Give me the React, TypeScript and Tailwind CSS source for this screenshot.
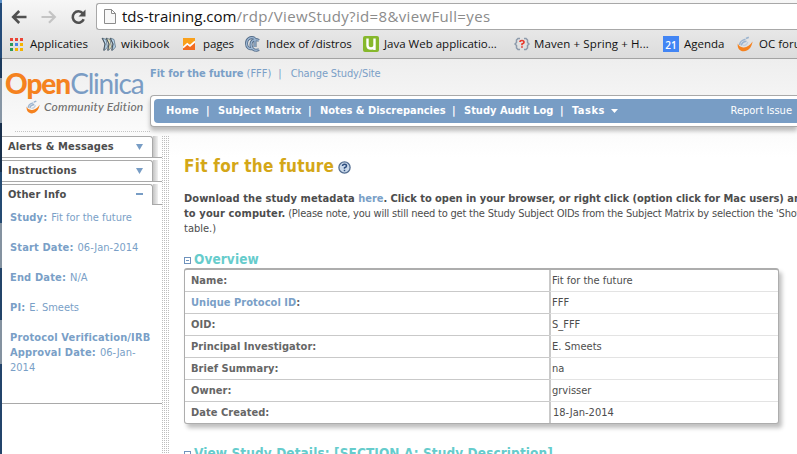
import React from "react";

const tahoma =
  "font-['DejaVu_Sans_Condensed','DejaVu_Sans',sans-serif] [font-stretch:75%]";
const segoe = "font-['Open_Sans',sans-serif]";

function Swoosh({ className }: { className: string }) {
  return (
    <svg className={className} viewBox="0 0 16 16" fill="none">
      <path d="M0.800 7.500C0 12.500 3 15.500 7 15.300C11 15 14.500 12 15.600 5.500C13 9.500 9.500 11.800 6.200 11.400C3.500 11 1.500 10 0.800 7.500Z" fill="#f5821f" />
      <path d="M2.600 9C2.500 6.500 5 4 8.500 3.300M4.500 9.500C4.500 7.500 6.500 5.600 9.500 5.200M9 2.500L11.800 1.200" stroke="#9cb4cf" strokeWidth="1.600" />
      <path d="M6 9.400C8 9.600 10 8.500 10.800 6" stroke="#c3cfdc" strokeWidth="1.300" />
    </svg>
  );
}

function AppsIcon() {
  const colors = ["#ea4335", "#ea4335", "#ea4335", "#2b9a5b", "#4a86e8", "#f4b400", "#2b9a5b", "#f4b400", "#f4b400"];
  return (
    <svg className="h-[13px] w-[13px]" viewBox="0 0 13 13" shapeRendering="crispEdges">
      {colors.map((c, i) => (
        <rect key={i} x={(i % 3) * 5} y={Math.floor(i / 3) * 5} width="3" height="3" fill={c} />
      ))}
    </svg>
  );
}

function BooksIcon() {
  return (
    <svg className="h-4 w-4" viewBox="0 0 16 16">
      {[0, 4, 8].map((x) => (
        <g key={x}>
          <path d={`M${x + 1.5} 2L${x + 5} 3.500L${x + 6.5} 11L${x + 3.5} 14.500L${x + 4} 8Z`} fill={x === 4 ? "#eee5b8" : "#bcd8ed"} stroke="#4c6477" strokeWidth="0.700" />
          <path d={`M${x + 1} 2L${x + 4} 8L${x + 2.5} 14.500`} fill="none" stroke="#343d46" strokeWidth="0.800" />
        </g>
      ))}
    </svg>
  );
}

function Toolbar() {
  return (
    <div className="flex h-[30px] items-center bg-gradient-to-b from-[#f7f7f7] to-[#e9e9e9] pl-[9px]">
      <svg className="mt-[3px] h-[16px] w-[16px] shrink-0" viewBox="0 0 16 16" fill="none" stroke="#505050" strokeWidth="2.600">
        <path d="M15.500 8H3M8.200 2L2.200 8L8.200 14" />
      </svg>
      <svg className="mt-[3px] ml-[14px] h-[16px] w-[16px] shrink-0" viewBox="0 0 16 16" fill="none" stroke="#c4c4c4" strokeWidth="2.200">
        <path d="M0.500 8H13.500M8 2.200L13.800 8L8 13.800" />
      </svg>
      <svg className="mt-[3px] ml-[13px] h-[16px] w-[17px] shrink-0" viewBox="0 0 17 16" fill="none">
        <path d="M12.800 4.300A5.700 5.700 0 1 0 13.700 10.200" stroke="#505050" strokeWidth="2.600" />
        <path d="M15.500 0.500V7.500H8.500Z" fill="#505050" />
      </svg>
      <div className="mt-[3px] ml-[9px] flex h-[27px] grow items-center rounded-l-[3px] border border-r-0 border-[#a8a8a8] bg-white pb-[1px] pl-[7px]">
        <svg className="h-[16px] w-[12px] shrink-0" viewBox="0 0 12 16" fill="#f8f8f8" stroke="#8c8c8c">
          <path d="M0.500 1.500H7.500L11.500 5.500V15.500H0.500ZM7.500 1.500V5.500H11.500" />
        </svg>
        <span className={`${segoe} mb-[1px] ml-[6px] text-[15px] leading-[24px] tracking-[0.350px] whitespace-nowrap text-[#8b8b8b]`}>
          <span className="tracking-normal text-[#111]">tds-training.com</span>/rdp/ViewStudy?id=8&amp;viewFull=yes
        </span>
      </div>
    </div>
  );
}

function Bookmarks() {
  const label = "whitespace-nowrap";
  return (
    <div className={`${segoe} flex h-[29px] items-center border-b border-[#a3a3a3] bg-gradient-to-b from-[#e7e7e7] to-[#dcdcdc] pl-[8px] text-[11.500px] text-[#111]`}>
      <div className="flex w-[91px] shrink-0 items-center gap-[7px]"><AppsIcon /><span className={label}>Applicaties</span></div>
      <div className="flex w-[82px] shrink-0 items-center gap-[4px]"><BooksIcon /><span className={`${label} tracking-[0.100px]`}>wikibook</span></div>
      <div className="flex w-[62px] shrink-0 items-center gap-[8px]">
        <svg className="h-3 w-3 shrink-0" viewBox="0 0 12 12"><rect width="12" height="12" fill="#f26b21" /><path d="M0 0H12V3L7.500 7L5 5L0 9Z" fill="#f9a01b" /><path d="M0 9.500L4.300 5.800L7 8L12 3.500" fill="none" stroke="white" strokeWidth="1.700" /></svg>
        <span className={`${label} tracking-[-0.150px]`}>pages</span>
      </div>
      <div className="flex w-[118px] shrink-0 items-center gap-[5px]">
        <svg className="h-4 w-4 shrink-0" viewBox="0 0 16 16" fill="none">
          <path d="M10 2.500C5 0 1.500 3.500 1.500 7.500C1.500 11.500 4.500 13.500 7.500 12.500M14 4.500C9 2 6 5 6 8.500C6 13 10 15.500 14 13.500M10 2.500V11" stroke="#526b88" strokeWidth="3" />
          <path d="M10 2.500C5 0 1.500 3.500 1.500 7.500C1.500 11.500 4.500 13.500 7.500 12.500M14 4.500C9 2 6 5 6 8.500C6 13 10 15.500 14 13.500M10 2.500V11" stroke="#9fb9d5" strokeWidth="1.300" />
        </svg>
        <span className={`${label} tracking-[-0.100px]`}>Index of /distros</span>
      </div>
      <div className="flex w-[151px] shrink-0 items-center gap-[5px]">
        <svg className="h-4 w-4 shrink-0" viewBox="0 0 16 16"><rect width="16" height="16" rx="2" fill="#86b82c" /><path d="M4.500 2.500V9.500Q4.500 12.500 8 12.500Q11.500 12.500 11.500 9.500V2.500M11.500 9V14" fill="none" stroke="white" strokeWidth="2.400" /></svg>
        <span className={label}>Java Web applicatio...</span>
      </div>
      <div className="flex w-[149px] shrink-0 items-center gap-[4px]">
        <svg className="h-4 w-4 shrink-0" viewBox="0 0 16 16" fill="none">
          <path d="M6 2.500H4L2.500 4V6.500L1 8L2.500 9.500V12L4 13.500H6M10 2.500H12L13.500 4V6.500L15 8L13.500 9.500V12L12 13.500H10" stroke="#8d9aab" strokeWidth="1.500" />
          <path d="M6 6Q6 4.500 8 4.500T10 6.200Q10 7.200 8 8V9.300M8 10.300V11.800" stroke="#e8392c" strokeWidth="1.700" />
        </svg>
        <span className={`${label} tracking-[0.100px]`}>Maven + Spring + H...</span>
      </div>
      <div className="flex w-[74px] shrink-0 items-center gap-[5px]">
        <div className="flex h-4 w-4 items-end justify-center bg-[#4285f4] text-[10px] leading-[13px] font-semibold text-white">21</div>
        <span className={label}>Agenda</span>
      </div>
      <Swoosh className="h-4 w-4 shrink-0" />
      <span className="ml-[6px] whitespace-nowrap">OC forum</span>
    </div>
  );
}

function Header() {
  return (
    <div className="flex h-[77px]">
      <div className="h-[73px] w-[148px] shrink-0 pt-[7px] pl-[3px] font-[Lato,sans-serif]">
        <div className="flex h-[33px] items-baseline text-[28px] leading-[34px] whitespace-nowrap">
          <span className="font-black tracking-[-1.050px] text-[#f5821f]">Open</span>
          <span className="tracking-[-1.200px] text-[#7a9cc4]">Clinica</span>
        </div>
        <div className="flex items-center pl-[21px]">
          <Swoosh className="h-[14px] w-[14px]" />
          <span className="ml-[4px] text-[12px] leading-[16px] font-medium tracking-[0.220px] whitespace-nowrap text-[#707070] italic">Community Edition</span>
        </div>
        <div className="mt-[16px] ml-[10px] h-px bg-[repeating-linear-gradient(90deg,#c4c4c4_0_1px,transparent_1px_2px)]" />
      </div>
      <div className="min-w-0 grow">
        <div className="flex h-[36px] items-center pb-[6px] text-[11px] whitespace-nowrap text-[#7a9fc7]">
          <b className="tracking-[-0.050px]">Fit for the future</b><span className="ml-[3px]">(FFF)</span><span className="ml-[7px]">|</span><span className="ml-[9px] tracking-[-0.120px]">Change Study/Site</span>
        </div>
        <div className="h-[32px] rounded-l-[4px] border border-r-0 border-[#a9a9a9] bg-white py-[3px] pl-[3px] shadow-[0_4px_4px_rgba(0,0,0,0.250)]">
          <div className="flex h-[24px] items-center rounded-l-[4px] bg-[#789dc5] pt-[1px] pl-[12px] text-[11px] font-bold whitespace-nowrap text-white">
            <span className="w-[40px] tracking-[0.200px]">Home</span><span className="w-[12px]">|</span>
            <span className="w-[90px] tracking-[0.150px]">Subject Matrix</span><span className="w-[12px]">|</span>
            <span className="w-[132px]">Notes &amp; Discrepancies</span><span className="w-[12px]">|</span>
            <span className="w-[96px]">Study Audit Log</span><span className="w-[12px]">|</span>
            <span className="tracking-[0.500px]">Tasks</span>
            <svg className="mb-[1px] ml-[6px] h-[4px] w-[7px]" viewBox="0 0 7 4"><path d="M0 0H7L3.500 4Z" fill="white" /></svg>
            <span className="mr-[5px] ml-auto pb-[1px] font-normal">Report Issue</span>
          </div>
        </div>
      </div>
    </div>
  );
}

function Tab({ title, open = false }: { title: string; open?: boolean }) {
  return (
    <div className={open ? "flex h-[21px]" : "mb-[2px] flex h-[22px] border-b border-[#a9a9a9]"}>
      <div className="flex w-[151px] items-center justify-between rounded-tr-[3px] border-t border-r border-[#a9a9a9] bg-white pr-[9px] pl-[6px] text-[11px] font-bold tracking-[0.140px] whitespace-nowrap text-[#4d4d4d]">
        <span>{title}</span>
        {open ? <span className="mb-[2px] h-[2px] w-[7px] bg-[#789dc5]" /> : (
          <svg className="h-[6px] w-[7px]" viewBox="0 0 7 6"><path d="M0 0H7L3.500 6Z" fill="#789dc5" /></svg>
        )}
      </div>
      <div className={open ? "flex grow border-b border-[#a9a9a9]" : "flex grow"}><div className="w-[5px] bg-gradient-to-r from-[#c4c4c4] to-[#f1f1f1]" /></div>
    </div>
  );
}

function Fact({ name, children }: { name: React.ReactNode; children: React.ReactNode }) {
  return (
    <p className="mb-[15px] whitespace-nowrap">
      <b className="mr-[4px] tracking-[0.150px]">{name}</b>{children}
    </p>
  );
}

function Sidebar() {
  return (
    <div className="w-[160px] shrink-0">
      <Tab title="Alerts & Messages" />
      <Tab title="Instructions" />
      <Tab title="Other Info" open />
      <div className="h-[199px] border-b border-[#a9a9a9] pt-[5px] pl-[8px] text-[11px] leading-[15px] text-[#7a9fc7]">
        <Fact name="Study:">Fit for the future</Fact>
        <Fact name="Start Date:">06-Jan-2014</Fact>
        <Fact name="End Date:">N/A</Fact>
        <Fact name="PI:">E. Smeets</Fact>
        <Fact name={<>Protocol Verification/IRB<br />Approval Date:</>}>06-Jan-<br />2014</Fact>
      </div>
    </div>
  );
}

function CollapseIcon() {
  return (
    <svg className="mt-[3px] h-[7px] w-[7px] shrink-0" viewBox="0 0 7 7" fill="none" stroke="#6f93bd" shapeRendering="crispEdges">
      <rect x="0.500" y="0.500" width="6" height="6" fill="white" /><path d="M2 3.500H5" />
    </svg>
  );
}

const rows = [
  ["Name:", "Fit for the future"],
  ["Unique Protocol ID:", "FFF"],
  ["OID:", "S_FFF"],
  ["Principal Investigator:", "E. Smeets"],
  ["Brief Summary:", "na"],
  ["Owner:", "grvisser"],
  ["Date Created:", "18-Jan-2014"],
];

function Main() {
  return (
    <div className="min-w-0 grow overflow-hidden pt-[20px] pl-[15px] text-[#4d4d4d]">
      <div className="flex h-[22px] items-center">
        <h1 className="text-[17px] font-bold tracking-[0.240px] whitespace-nowrap text-[#d4a718]">Fit for the future</h1>
        <svg className="ml-[4px] h-[13px] w-[13px]" viewBox="0 0 13 13" fill="none">
          <circle cx="6.500" cy="6.500" r="5.600" fill="#c9d8ea" stroke="#536d91" strokeWidth="1.300" />
          <path d="M4.500 5Q4.500 3.300 6.500 3.300T8.500 5Q8.500 6 6.500 6.800V7.700M6.500 8.700V10.200" stroke="#2f4f80" strokeWidth="1.500" />
        </svg>
      </div>
      <div className="mt-[13px] text-[11px] leading-[15px] whitespace-nowrap">
        <p className="font-bold tracking-[-0.040px]"><span className="tracking-[0.070px]">Download the study metadata </span><span className="text-[#7a9fc7]">here</span>. Click to open in your browser, or right click (option click for Mac users) and save</p>
        <p className="tracking-[-0.205px]"><b className="tracking-[0.120px]">to your computer.</b> (Please note, you will still need to get the Study Subject OIDs from the Subject Matrix by selection the &apos;Show</p>
        <p>table.)</p>
      </div>
      <div className="mt-[14px] flex h-[18px] items-center gap-[3px] text-[13.500px] font-bold tracking-[0.100px] text-[#66cccc]"><CollapseIcon />Overview</div>
      <div className="w-[595px] rounded-[3px] border border-t-2 border-[#adadad] bg-white shadow-[3px_4px_4px_rgba(0,0,0,0.250)]">
        {rows.map(([name, value], i) => (
          <div key={name} className="group flex h-[22px] text-[11px] leading-[20px] last:h-[21px]">
            <div className="w-[364px] border-b border-[#c9c9c9] pt-[1px] pl-[6px] font-bold tracking-[0.040px] text-[#666] group-last:border-0">
              {i === 1 ? <><span className="text-[#7a9fc7]">Unique Protocol ID</span>:</> : name}
            </div>
            <div className={`grow border-b border-l-2 border-b-[#e3e3e3] border-l-[#c9c9c9] pt-[1px] group-last:border-b-0 ${i === 6 ? "pl-[2px]" : "pl-[1px]"}`}>{value}</div>
          </div>
        ))}
      </div>
      <div className="mt-[20px] flex h-[18px] items-center gap-[3px] text-[13.500px] font-bold tracking-[0.100px] whitespace-nowrap text-[#66cccc]"><CollapseIcon />View Study Details: [SECTION A: Study Description]</div>
    </div>
  );
}

export default function App() {
  return (
    <div className="flex h-[454px] w-[797px] overflow-hidden bg-white">
      <div className="w-[2px] shrink-0 bg-[linear-gradient(#5c91c8_0_3px,#234a78_3px_58px,#1c3a5c_58px_78px,#8796a5_78px_123px,#182f4b_123px_172px,#254b73_172px_223px,#8492a0_223px_268px,#234469_268px_320px,#8492a0_320px_364px,#23446b_364px)]" />
      <div className="flex min-w-0 grow flex-col">
        <Toolbar />
        <Bookmarks />
        <div className={`${tahoma} grow bg-[linear-gradient(#eeeeee,#ffffff_98px)]`}>
          <Header />
          <div className="flex h-[318px]">
            <Sidebar />
            <div className="w-[7px] shrink-0 bg-[radial-gradient(circle_at_0.5px_0.5px,#bdbdbd_0.6px,transparent_0.7px)] bg-[size:2px_2px]" />
            <Main />
          </div>
        </div>
      </div>
    </div>
  );
}
